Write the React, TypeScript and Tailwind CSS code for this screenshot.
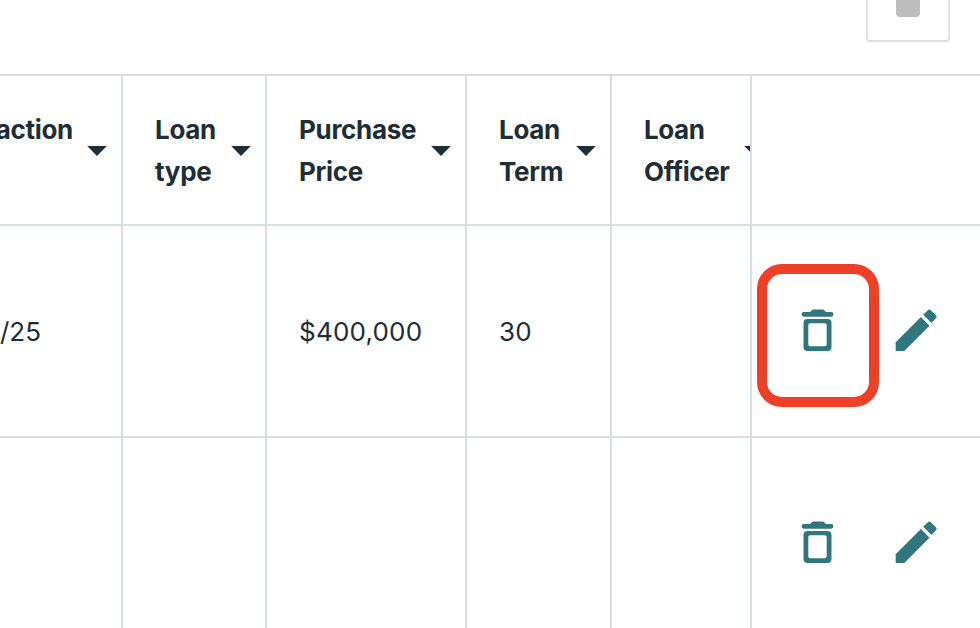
import type { ReactNode } from "react";

function Caret() {
  return (
    <svg className="h-[10px] w-5 shrink-0" viewBox="0 0 20 10" fill="#212d35">
      <path d="M.2 0h19.6L10 9.9z" />
    </svg>
  );
}

function TrashIcon() {
  return (
    <svg className="h-[42px] w-[34px] shrink-0" viewBox="0 0 34 42" fill="#30767f">
      <path d="M2.900 3H9l1.600-1.600Q11.300.5 12.400.5h9.200q1.100 0 1.800.9L25 3h5.100a2.350 2.350 0 0 1 0 4.700H2.900a2.350 2.350 0 0 1 0-4.700z" />
      <path
        fillRule="evenodd"
        d="M6.500 10h20a4 4 0 0 1 4 4v24a4 4 0 0 1-4 4h-20a4 4 0 0 1-4-4V14a4 4 0 0 1 4-4zM9.300 14.300a2 2 0 0 0-2 2v19a2 2 0 0 0 2 2h14.400a2 2 0 0 0 2-2v-19a2 2 0 0 0-2-2z"
      />
    </svg>
  );
}

function PencilIcon() {
  return (
    <svg className="h-[42px] w-[42px] shrink-0" viewBox="0 0 42 42" fill="#30767f">
      <path d="M.7 33.300 25.900 8.100l8.600 8.600L9.300 42H.7z" />
      <path d="M28.200 5.800 32.800 1.200q1.500-1.400 3 0l5.100 5.100q1.500 1.500 0 3l-4.500 4.700z" />
    </svg>
  );
}

function HeaderCell({ children }: { children: ReactNode }) {
  return (
    <div className="flex items-center justify-between border-r-2 border-b-2 border-[#d8dfe2] pt-[2px] pr-[14px] pl-8 text-[26px] leading-[42px] font-bold tracking-[-0.3px]">
      {children}
      <Caret />
    </div>
  );
}

function Cell({ children }: { children?: ReactNode }) {
  return (
    <div className="flex items-center border-r-2 border-b-2 border-[#d8dfe2] pt-[2px] pl-8 text-[26px] leading-[42px] tracking-[0.2px]">
      {children}
    </div>
  );
}

function Actions({ marked = false }: { marked?: boolean }) {
  return (
    <div className="relative flex items-center gap-[60px] border-b-2 border-[#d8dfe2] pb-[2px] pl-[49px]">
      <TrashIcon />
      <PencilIcon />
      {marked && (
        <div className="absolute top-[38px] left-[5px] h-[143px] w-[122px] rounded-[25px] border-[10px] border-[#ee4026]" />
      )}
    </div>
  );
}

export default function App() {
  return (
    <div className="h-[628px] w-[980px] overflow-hidden bg-white font-['Inter','Liberation_Sans',sans-serif] text-[#212d35]">
      <div className="flex h-[74px] items-start justify-end overflow-hidden pr-[30px]">
        <div className="flex h-[42px] w-[84px] justify-center rounded-b-[4px] border-2 border-t-0 border-[#e0e0e0]">
          <div className="h-[17px] w-6 rounded-b-[4px] bg-[#bdbdbd]" />
        </div>
      </div>
      <div className="grid grid-cols-[123px_144px_200px_145px_140px_228px] grid-rows-[150px_212px_212px] border-t-2 border-[#d8dfe2]">
        <div className="flex items-center justify-end border-r-2 border-b-2 border-[#d8dfe2] pt-[2px] pr-[14px] text-[26px] leading-[42px] font-bold tracking-[-0.3px]">
          <span className="mr-[14px] h-[84px]">action</span>
          <Caret />
        </div>
        <HeaderCell>
          <span>Loan<br />type</span>
        </HeaderCell>
        <HeaderCell>
          <span>Purchase<br />Price</span>
        </HeaderCell>
        <HeaderCell>
          <span>Loan<br />Term</span>
        </HeaderCell>
        <div className="flex items-center overflow-hidden border-r-2 border-b-2 border-[#d8dfe2] pt-[2px] pl-8 text-[26px] leading-[42px] font-bold tracking-[-0.4px]">
          <span className="w-[100px] shrink-0">Loan<br />Officer</span>
          <Caret />
        </div>
        <div className="border-b-2 border-[#d8dfe2]" />

        <div className="flex items-center border-r-2 border-b-2 border-[#d8dfe2] pt-[2px] text-[26px] leading-[42px]">/25</div>
        <Cell />
        <Cell>$400,000</Cell>
        <Cell>30</Cell>
        <Cell />
        <Actions marked />

        <Cell />
        <Cell />
        <Cell />
        <Cell />
        <Cell />
        <Actions />
      </div>
    </div>
  );
}
